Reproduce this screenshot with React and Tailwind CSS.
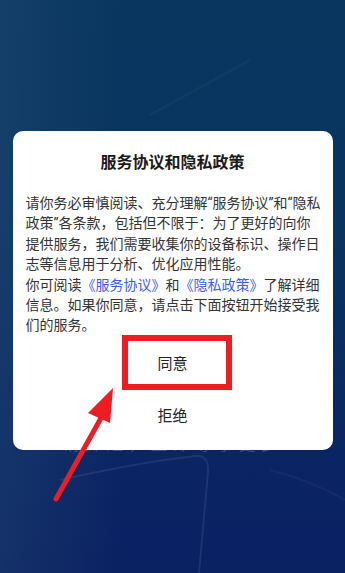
import React from 'react';

const font = { fontFamily: 'Roboto, "Noto Sans CJK SC", sans-serif' };

export default function App() {
  return (
    <div
      className="relative w-[345px] h-[573px] overflow-hidden bg-[linear-gradient(90deg,rgba(40,80,120,0.35)_0%,rgba(40,80,120,0)_35%),linear-gradient(180deg,#08365f_0%,#08355f_40%,#0a2564_80%,#0a2162_100%)]"
      style={font}
    >
      {/* 背景の装飾線 */}
      <svg className="absolute inset-0" width="345" height="573" viewBox="0 0 345 573" fill="none">
        <path d="M60 480 Q140 462 196 456 Q209 455 208 472 L199 573" stroke="rgba(255,255,255,0.08)" strokeWidth="2" />
        <path d="M150 115 L250 60" stroke="rgba(255,255,255,0.03)" strokeWidth="2" />
        <path d="M270 470 Q310 480 345 500" stroke="rgba(255,255,255,0.04)" strokeWidth="2" />
      </svg>

      {/* 背景テキスト（カードの下に一部だけ見える） */}
      <div className="pt-[434px] text-center">
        <p className="text-[17px] leading-[20px] tracking-[5px] text-[rgba(200,210,230,0.25)]">
          请开通，立即尊享更多
        </p>
      </div>

      {/* ダイアログ */}
      <div className="absolute inset-0 flex justify-center pt-[131px]">
        <div className="w-[320px] h-[319px] bg-white rounded-[10px] flex flex-col">
          <h1 className="pt-[21px] text-center text-[16px] leading-[22px] font-bold text-[#1a1a1a]">
            服务协议和隐私政策
          </h1>
          <p className="mt-[19px] px-[13px] text-[14px] leading-[20.4px] text-[#333333] whitespace-nowrap">
            请你务必审慎阅读、充分理解“服务协议”和“隐私<br />
            政策”各条款，包括但不限于：为了更好的向你<br />
            提供服务，我们需要收集你的设备标识、操作日<br />
            志等信息用于分析、优化应用性能。<br />
            你可阅读<span className="text-[#3d5cf2]">《服务协议》</span>和<span className="text-[#3d5cf2]">《隐私政策》</span>了解详细<br />
            信息。如果你同意，请点击下面按钮开始接受我<br />
            们的服务。
          </p>
          <div className="flex flex-col mt-[2px]">
            <button className="h-[52px] flex items-center justify-center text-[15px] text-[#222222]">同意</button>
            <button className="h-[53px] flex items-center justify-center text-[15px] text-[#222222]">拒绝</button>
          </div>
        </div>
      </div>

      {/* 注釈：赤枠 */}
      <div className="absolute left-[122px] top-[335px] w-[110px] h-[55px] border-[6px] border-[#ee1d24]" />

      {/* 注釈：矢印 */}
      <svg className="absolute inset-0 pointer-events-none" width="345" height="573" viewBox="0 0 345 573" fill="none">
        <line x1="56" y1="499" x2="101" y2="418" stroke="#ee1d24" strokeWidth="5" strokeLinecap="round" />
        <polygon points="113,388 88,413 110,423" fill="#ee1d24" />
      </svg>
    </div>
  );
}
